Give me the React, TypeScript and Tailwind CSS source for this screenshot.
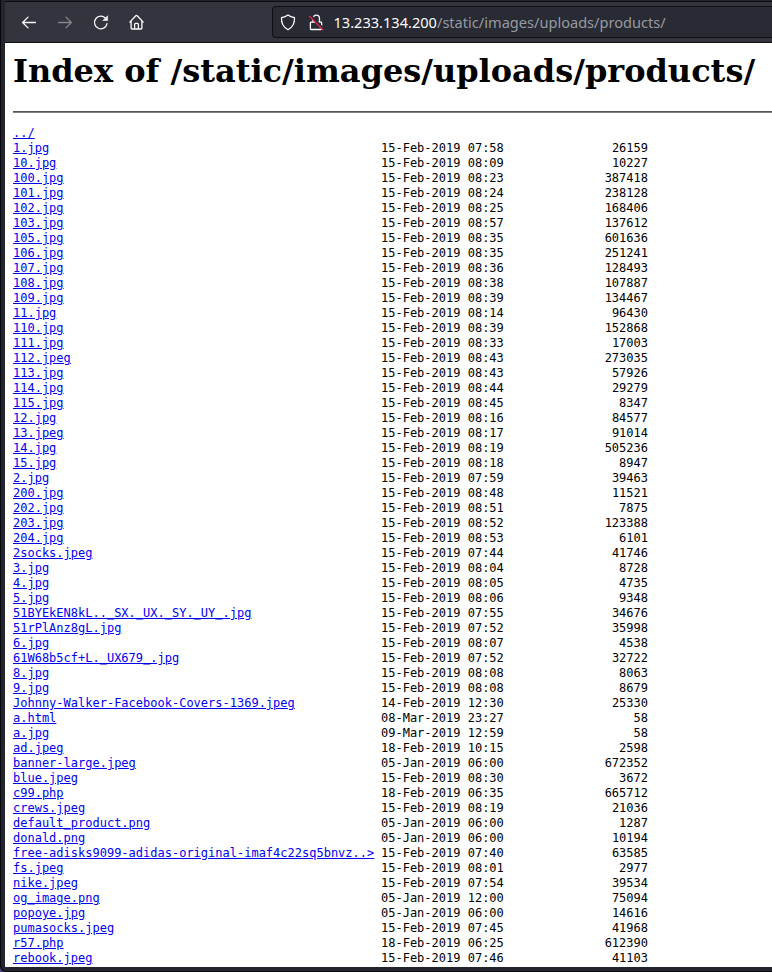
import React from 'react';

const rows: [string, string, string][] = [
  ['1.jpg', '15-Feb-2019 07:58', '26159'],
  ['10.jpg', '15-Feb-2019 08:09', '10227'],
  ['100.jpg', '15-Feb-2019 08:23', '387418'],
  ['101.jpg', '15-Feb-2019 08:24', '238128'],
  ['102.jpg', '15-Feb-2019 08:25', '168406'],
  ['103.jpg', '15-Feb-2019 08:57', '137612'],
  ['105.jpg', '15-Feb-2019 08:35', '601636'],
  ['106.jpg', '15-Feb-2019 08:35', '251241'],
  ['107.jpg', '15-Feb-2019 08:36', '128493'],
  ['108.jpg', '15-Feb-2019 08:38', '107887'],
  ['109.jpg', '15-Feb-2019 08:39', '134467'],
  ['11.jpg', '15-Feb-2019 08:14', '96430'],
  ['110.jpg', '15-Feb-2019 08:39', '152868'],
  ['111.jpg', '15-Feb-2019 08:33', '17003'],
  ['112.jpeg', '15-Feb-2019 08:43', '273035'],
  ['113.jpg', '15-Feb-2019 08:43', '57926'],
  ['114.jpg', '15-Feb-2019 08:44', '29279'],
  ['115.jpg', '15-Feb-2019 08:45', '8347'],
  ['12.jpg', '15-Feb-2019 08:16', '84577'],
  ['13.jpeg', '15-Feb-2019 08:17', '91014'],
  ['14.jpg', '15-Feb-2019 08:19', '505236'],
  ['15.jpg', '15-Feb-2019 08:18', '8947'],
  ['2.jpg', '15-Feb-2019 07:59', '39463'],
  ['200.jpg', '15-Feb-2019 08:48', '11521'],
  ['202.jpg', '15-Feb-2019 08:51', '7875'],
  ['203.jpg', '15-Feb-2019 08:52', '123388'],
  ['204.jpg', '15-Feb-2019 08:53', '6101'],
  ['2socks.jpeg', '15-Feb-2019 07:44', '41746'],
  ['3.jpg', '15-Feb-2019 08:04', '8728'],
  ['4.jpg', '15-Feb-2019 08:05', '4735'],
  ['5.jpg', '15-Feb-2019 08:06', '9348'],
  ['51BYEkEN8kL.._SX._UX._SY._UY_.jpg', '15-Feb-2019 07:55', '34676'],
  ['51rPlAnz8gL.jpg', '15-Feb-2019 07:52', '35998'],
  ['6.jpg', '15-Feb-2019 08:07', '4538'],
  ['61W68b5cf+L._UX679_.jpg', '15-Feb-2019 07:52', '32722'],
  ['8.jpg', '15-Feb-2019 08:08', '8063'],
  ['9.jpg', '15-Feb-2019 08:08', '8679'],
  ['Johnny-Walker-Facebook-Covers-1369.jpeg', '14-Feb-2019 12:30', '25330'],
  ['a.html', '08-Mar-2019 23:27', '58'],
  ['a.jpg', '09-Mar-2019 12:59', '58'],
  ['ad.jpeg', '18-Feb-2019 10:15', '2598'],
  ['banner-large.jpeg', '05-Jan-2019 06:00', '672352'],
  ['blue.jpeg', '15-Feb-2019 08:30', '3672'],
  ['c99.php', '18-Feb-2019 06:35', '665712'],
  ['crews.jpeg', '15-Feb-2019 08:19', '21036'],
  ['default_product.png', '05-Jan-2019 06:00', '1287'],
  ['donald.png', '05-Jan-2019 06:00', '10194'],
  ['free-adisks9099-adidas-original-imaf4c22sq5bnvz..>', '15-Feb-2019 07:40', '63585'],
  ['fs.jpeg', '15-Feb-2019 08:01', '2977'],
  ['nike.jpeg', '15-Feb-2019 07:54', '39534'],
  ['og_image.png', '05-Jan-2019 12:00', '75094'],
  ['popoye.jpg', '05-Jan-2019 06:00', '14616'],
  ['pumasocks.jpeg', '15-Feb-2019 07:45', '41968'],
  ['r57.php', '18-Feb-2019 06:25', '612390'],
  ['rebook.jpeg', '15-Feb-2019 07:46', '41103'],
];

const Icon = ({ children, className }: { children: React.ReactNode; className: string }) => (
  <svg
    width="16"
    height="16"
    viewBox="0 -0.5 16 16"
    fill="none"
    stroke="currentColor"
    strokeWidth="1.3"
    strokeLinecap="round"
    strokeLinejoin="round"
    className={`shrink-0 overflow-visible ${className}`}
  >
    {children}
  </svg>
);

function Toolbar() {
  return (
    <header className="flex h-[42px] shrink-0 items-center border-t border-b border-[#0c0c12] bg-[#33353e] pl-4 text-[#fbfbfe]">
      <Icon className="">
        <path d="M14.4 8H1.6M7 2.6L1.6 8L7 13.4" />
      </Icon>
      <Icon className="ml-5 text-[#85868b]">
        <path d="M1.6 8H14.4M9 2.6L14.4 8L9 13.4" />
      </Icon>
      <Icon className="ml-5">
        <path d="M14 9.2A6.3 6.3 0 1 1 12.6 3.9" />
        <path d="M14.6 1.6V6H10.2Z" fill="currentColor" strokeWidth="0.6" />
      </Icon>
      <Icon className="ml-5">
        <path d="M.8 7.6L6.8 1.2Q7.5 .5 8.2 1.2L14.2 7.6M2.1 6.5V13.4Q2.1 14.5 3.2 14.5H11.8Q12.9 14.5 12.9 13.4V6.5M5.6 14.3V10Q5.6 8.9 6.6 8.9H8.4Q9.4 8.9 9.4 10V14.3" />
      </Icon>
      <div className="ml-[127px] flex h-8 flex-1 items-center rounded-l border border-r-0 border-[#0e0f15] bg-[#282a34] pl-[7px]">
        <Icon className="">
          <path d="M8 .4Q10.4 2.4 14.5 3.1C14.8 8.3 12.8 12.6 8 15.2C3.2 12.6 1.2 8.3 1.5 3.1Q5.6 2.4 8 .4Z" />
        </Icon>
        <Icon className="ml-3">
          <path d="M4.9 7.4V4.2A3.3 3.5 0 0 1 11.5 4.2V7.4M3.2 7.6H13Q13.6 7.6 13.6 8.2V14.2Q13.6 15 12.8 15H3.2Q2.4 15 2.4 14.2V8.2Q2.4 7.6 3.2 7.6Z" />
          <path d="M2.6 1.2L15.2 14.2" stroke="#282a34" strokeWidth="2.4" />
          <path d="M1.5 1.8L14.8 15.2" stroke="#e22850" />
        </Icon>
        <div className="ml-[9.5px] whitespace-nowrap font-['Noto_Sans',sans-serif] text-[14.58px] leading-5 text-[#989aa0]">
          <span className="text-[#fbfbfe]">13.233.134.200</span>/static/images/uploads/products/
        </div>
      </div>
    </header>
  );
}

export default function App() {
  return (
    <div className="h-[972px] w-[772px] overflow-hidden bg-[#4b3f7d]">
      <div className="flex h-full flex-col overflow-hidden rounded-bl-[6px] border-b border-l border-[#08090d] bg-[#22242e] pt-px pb-1 pl-1">
        <Toolbar />
        <main className="flex-1 overflow-hidden bg-white pl-2 text-black">
          <h1 className="mt-[9px] whitespace-nowrap font-['DejaVu_Serif',serif] text-[32px] leading-[38px] font-bold">
            Index of /static/images/uploads/products/
          </h1>
          <hr className="mt-[21px] h-0.5 border-t border-b border-t-[#555] border-b-[#808080]" />
          <div className="mt-[13px] font-['DejaVu_Sans_Mono',monospace] text-[12px] leading-[15px]">
            <div>
              <a className="text-[#0000ee] underline">../</a>
            </div>
            {rows.map(([name, date, size]) => (
              <div key={name} className="grid grid-cols-[368px_124px_143px] whitespace-pre">
                <span>
                  <a className="text-[#0000ee] underline">{name}</a>
                </span>
                <span>{date}</span>
                <span className="text-right">{size}</span>
              </div>
            ))}
          </div>
        </main>
      </div>
    </div>
  );
}
